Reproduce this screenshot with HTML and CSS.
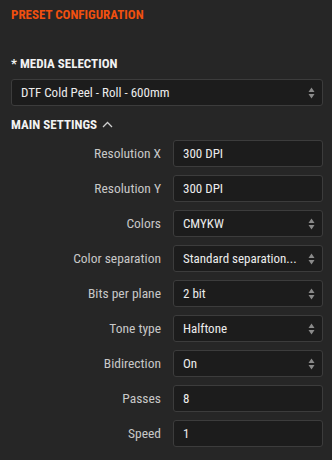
FILE: index.html
```html
<!DOCTYPE html>
<html>
<head>
<meta charset="utf-8">
<link rel="stylesheet" href="styles.css">
</head>
<body>
<div class="panel">
  <div class="title">PRESET CONFIGURATION</div>
  <div class="section-label">* MEDIA SELECTION</div>
  <div class="field select wide"><span class="value">DTF Cold Peel - Roll - 600mm</span><span class="arrows"><svg width="7" height="12" viewBox="0 0 7 12"><path d="M3.5 0.5 L6.5 5 L0.5 5 Z" fill="#8a8a8a"/><path d="M3.5 11.5 L6.5 7 L0.5 7 Z" fill="#8a8a8a"/></svg></span></div>
  <div class="section-head">MAIN SETTINGS <svg class="chev" width="11" height="7" viewBox="0 0 11 7"><path d="M1 6 L5.5 1.5 L10 6" fill="none" stroke="#cfcfcf" stroke-width="1.3"/></svg></div>
  <div class="grid">
    <div class="label">Resolution X</div>
    <div class="field"><span class="value">300 DPI</span></div>
    <div class="label">Resolution Y</div>
    <div class="field"><span class="value">300 DPI</span></div>
    <div class="label">Colors</div>
    <div class="field select"><span class="value">CMYKW</span><span class="arrows"><svg width="7" height="12" viewBox="0 0 7 12"><path d="M3.5 0.5 L6.5 5 L0.5 5 Z" fill="#8a8a8a"/><path d="M3.5 11.5 L6.5 7 L0.5 7 Z" fill="#8a8a8a"/></svg></span></div>
    <div class="label">Color separation</div>
    <div class="field select"><span class="value">Standard separation...</span><span class="arrows"><svg width="7" height="12" viewBox="0 0 7 12"><path d="M3.5 0.5 L6.5 5 L0.5 5 Z" fill="#8a8a8a"/><path d="M3.5 11.5 L6.5 7 L0.5 7 Z" fill="#8a8a8a"/></svg></span></div>
    <div class="label">Bits per plane</div>
    <div class="field select"><span class="value">2 bit</span><span class="arrows"><svg width="7" height="12" viewBox="0 0 7 12"><path d="M3.5 0.5 L6.5 5 L0.5 5 Z" fill="#8a8a8a"/><path d="M3.5 11.5 L6.5 7 L0.5 7 Z" fill="#8a8a8a"/></svg></span></div>
    <div class="label">Tone type</div>
    <div class="field select"><span class="value">Halftone</span><span class="arrows"><svg width="7" height="12" viewBox="0 0 7 12"><path d="M3.5 0.5 L6.5 5 L0.5 5 Z" fill="#8a8a8a"/><path d="M3.5 11.5 L6.5 7 L0.5 7 Z" fill="#8a8a8a"/></svg></span></div>
    <div class="label">Bidirection</div>
    <div class="field select"><span class="value">On</span><span class="arrows"><svg width="7" height="12" viewBox="0 0 7 12"><path d="M3.5 0.5 L6.5 5 L0.5 5 Z" fill="#8a8a8a"/><path d="M3.5 11.5 L6.5 7 L0.5 7 Z" fill="#8a8a8a"/></svg></span></div>
    <div class="label">Passes</div>
    <div class="field"><span class="value">8</span></div>
    <div class="label">Speed</div>
    <div class="field"><span class="value">1</span></div>
  </div>
</div>
</body>
</html>
```

FILE: styles.css
```css
html, body {
  margin: 0;
  padding: 0;
  background: #262626;
}
body {
  width: 332px;
  height: 460px;
  overflow: hidden;
  font-family: "Roboto", "Noto Sans", sans-serif;
  font-stretch: semi-condensed;
}
.panel {
  padding: 7px 9px 0 11px;
}
.title {
  color: #f0500f;
  font-weight: 700;
  font-size: 13px;
  line-height: 16px;
}
.section-label {
  margin-top: 33px;
  color: #f2f2f2;
  font-weight: 700;
  font-size: 13px;
  line-height: 16px;
}
.field {
  box-sizing: border-box;
  height: 27px;
  background: #1c1c1c;
  border: 1px solid #3c3c3c;
  border-radius: 3px;
  display: flex;
  align-items: center;
  padding: 0 7px 0 9px;
  color: #ececec;
  font-size: 13px;
}
.field.wide {
  margin-top: 7px;
}
.value {
  flex: 1;
  white-space: nowrap;
  overflow: hidden;
}
.arrows {
  display: flex;
  align-items: center;
}
.arrows svg {
  display: block;
}
.section-head {
  margin-top: 11px;
  color: #f2f2f2;
  font-weight: 700;
  font-size: 13px;
  line-height: 16px;
  display: flex;
  align-items: center;
  gap: 5px;
}
.chev {
  display: block;
  margin-top: -2px;
}
.grid {
  margin-top: 7px;
  display: grid;
  grid-template-columns: 1fr 150px;
  column-gap: 12px;
  row-gap: 8px;
}
.label {
  text-align: right;
  color: #c8c8c8;
  font-size: 13.5px;
  line-height: 27px;
}
```
